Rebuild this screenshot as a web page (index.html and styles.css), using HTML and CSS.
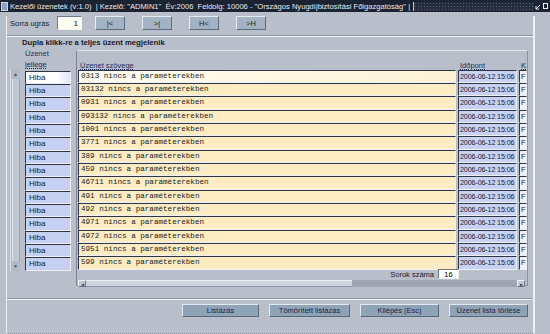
FILE: index.html
```html
<!DOCTYPE html>
<html>
<head>
    <meta charset="utf-8">
    <link rel="stylesheet" href="styles.css">
</head>
<body>
    <div class="titlebar">
        <span class="title-icon"></span>
        <span class="title-text">Kezelői üzenetek (v:1.0) &nbsp;| Kezelő: "ADMIN1" &nbsp;Év:2006 &nbsp;Feldolg: 10006 - "Országos Nyugdíjbiztosítási Főigazgatóság" |</span>
        <span class="title-fill"></span>
        <span class="title-btns">
            <svg width="14" height="8" viewBox="0 0 14 8">
                <path d="M1 7 L5 3 M1 7 H4 M1 7 V4" stroke="#e8ecf4" stroke-width="1" fill="none"/>
                <rect x="8.5" y="1.5" width="4" height="5" stroke="#e8ecf4" fill="none"/>
            </svg>
        </span>
    </div>

    <div class="window">
        <div class="toolbar">
            <label class="jump-label">Sorra ugrás</label>
            <input class="jump-input" type="text" value="1">
            <button class="nav-btn first">|&lt;</button>
            <button class="nav-btn">&gt;|</button>
            <button class="nav-btn">H&lt;</button>
            <button class="nav-btn">&gt;H</button>
        </div>

        <div class="frame">
            <div class="caption">Dupla klikk-re a teljes üzent megjelenik</div>
            <div class="panel">
                <div class="vscroll">
                    <span class="arrow up">&#9650;</span>
                    <span class="track"></span>
                    <span class="arrow down">&#9660;</span>
                </div>

                <div class="kind-col">
                    <div class="kind-head">Üzenet<br><u>jellege</u></div>
                    <div class="kind current">Hiba</div>
                    <div class="kind">Hiba</div>
                    <div class="kind">Hiba</div>
                    <div class="kind">Hiba</div>
                    <div class="kind">Hiba</div>
                    <div class="kind">Hiba</div>
                    <div class="kind">Hiba</div>
                    <div class="kind">Hiba</div>
                    <div class="kind">Hiba</div>
                    <div class="kind">Hiba</div>
                    <div class="kind">Hiba</div>
                    <div class="kind">Hiba</div>
                    <div class="kind">Hiba</div>
                    <div class="kind">Hiba</div>
                    <div class="kind">Hiba</div>
                </div>

                <div class="grid">
                    <div class="grid-head">
                        <span class="col-msg">Üzenet szövege</span>
                        <span class="col-time">Időpont</span>
                        <span class="col-k">K</span>
                    </div>
                    <div class="row current"><span class="msg">0313 nincs a paraméterekben</span><span class="time">2006-06-12 15:06</span><span class="k">F</span></div>
                    <div class="row"><span class="msg">03132 nincs a paraméterekben</span><span class="time">2006-06-12 15:06</span><span class="k">F</span></div>
                    <div class="row"><span class="msg">0931 nincs a paraméterekben</span><span class="time">2006-06-12 15:06</span><span class="k">F</span></div>
                    <div class="row"><span class="msg">093132 nincs a paraméterekben</span><span class="time">2006-06-12 15:06</span><span class="k">F</span></div>
                    <div class="row"><span class="msg">1001 nincs a paraméterekben</span><span class="time">2006-06-12 15:06</span><span class="k">F</span></div>
                    <div class="row"><span class="msg">3771 nincs a paraméterekben</span><span class="time">2006-06-12 15:06</span><span class="k">F</span></div>
                    <div class="row"><span class="msg">389 nincs a paraméterekben</span><span class="time">2006-06-12 15:06</span><span class="k">F</span></div>
                    <div class="row"><span class="msg">459 nincs a paraméterekben</span><span class="time">2006-06-12 15:06</span><span class="k">F</span></div>
                    <div class="row"><span class="msg">46711 nincs a paraméterekben</span><span class="time">2006-06-12 15:06</span><span class="k">F</span></div>
                    <div class="row"><span class="msg">491 nincs a paraméterekben</span><span class="time">2006-06-12 15:06</span><span class="k">F</span></div>
                    <div class="row"><span class="msg">492 nincs a paraméterekben</span><span class="time">2006-06-12 15:06</span><span class="k">F</span></div>
                    <div class="row"><span class="msg">4971 nincs a paraméterekben</span><span class="time">2006-06-12 15:06</span><span class="k">F</span></div>
                    <div class="row"><span class="msg">4972 nincs a paraméterekben</span><span class="time">2006-06-12 15:06</span><span class="k">F</span></div>
                    <div class="row"><span class="msg">5951 nincs a paraméterekben</span><span class="time">2006-06-12 15:06</span><span class="k">F</span></div>
                    <div class="row"><span class="msg">599 nincs a paraméterekben</span><span class="time">2006-06-12 15:06</span><span class="k">F</span></div>
                    <div class="count">
                        <span>Sorok száma</span>
                        <input class="count-input" type="text" value="16">
                    </div>
                    <div class="hscroll">
                        <span class="h-arrow">&#9664;</span>
                        <span class="h-thumb"></span>
                        <span class="h-rest"></span>
                        <span class="h-arrow right">&#9654;</span>
                    </div>
                </div>
            </div>
        </div>

        <div class="actions">
            <button class="act-btn w77">Listázás</button>
            <button class="act-btn w81">Tömörített listázás</button>
            <button class="act-btn w79">Kilépés (Esc)</button>
            <button class="act-btn w79">Üzenet lista törlése</button>
        </div>
    </div>
</body>
</html>
```

FILE: styles.css
```css
body {
    margin: 0;
    width: 550px;
    height: 334px;
    overflow: hidden;
    background: #b9bfca;
    font-family: "Liberation Sans", Arial, sans-serif;
    font-size: 7.5px;
    color: #141c30;
    white-space: nowrap;
}
.titlebar {
    height: 12px;
    display: flex;
    align-items: center;
    background: #1b2232;
    color: #e8ecf4;
    font-size: 7.6px;
}
.title-icon {
    width: 5px;
    height: 7px;
    margin: 0 2px 0 1px;
    background: #8fa0c0;
    border: 1px solid #d0d8e8;
}
.title-text {
    padding-right: 3px;
}
.title-fill {
    flex: 1;
    height: 9px;
    background-color: #232b3c;
    background-image: radial-gradient(#56607a 0.6px, transparent 0.8px);
    background-size: 3px 3px;
    border-left: 1px solid #c8ccd6;
}
.title-btns {
    width: 16px;
    display: flex;
    justify-content: center;
}
.window {
    width: 526px;
    height: 317px;
    margin-left: 6px;
    border-left: 1px solid #eef0f4;
    border-right: 2px solid #eef0f4;
    border-bottom: 1px dotted #8a92a0;
}
.toolbar {
    display: flex;
    align-items: center;
    height: 14px;
    margin-top: 4px;
    padding-left: 3px;
}
.jump-label {
    width: 47px;
}
.jump-input {
    width: 25px;
    height: 14px;
    box-sizing: border-box;
    padding: 0 3px;
    border: 1px solid;
    border-color: #707888 #f4f4f4 #f4f4f4 #707888;
    background: #fffef2;
    font: 7.5px "Liberation Sans", Arial, sans-serif;
    text-align: right;
}
.nav-btn {
    width: 30px;
    height: 14px;
    margin-left: 17px;
    padding: 0;
    background: #a3b3c3;
    border: 1px solid;
    border-color: #e6ecf2 #5d6c7c #5d6c7c #e6ecf2;
    font: 7.5px "Liberation Sans", Arial, sans-serif;
    color: #141c30;
}
.nav-btn.first {
    margin-left: 13px;
}
.frame {
    height: 262px;
    margin-top: 6px;
    border-top: 1px solid #f0f2f6;
    border-bottom: 1px solid #f0f2f6;
    box-shadow: 0 -1px 0 #8c94a2, 0 -1px 0 #8c94a2 inset;
}
.caption {
    height: 11px;
    line-height: 11px;
    padding-left: 15px;
    font-size: 7.7px;
    font-weight: bold;
}
.panel {
    display: flex;
    align-items: flex-start;
    padding-left: 3px;
}
.vscroll {
    width: 10px;
    height: 202px;
    margin-top: 21px;
    display: flex;
    flex-direction: column;
    align-items: center;
    background: #b3bac5;
    border-left: 1px solid #d8dce4;
    box-sizing: border-box;
}
.vscroll .arrow {
    font-size: 5px;
    line-height: 10px;
    color: #4a5262;
}
.vscroll .track {
    flex: 1;
    width: 6px;
    background: #c1c7d1;
    border-left: 1px solid #dde1e8;
    border-right: 1px solid #9aa2ae;
}
.kind-col {
    width: 46px;
    margin-left: 5px;
}
.kind-head {
    height: 22.7px;
    line-height: 11px;
    color: #1e2a60;
}
.kind-head u {
    text-decoration-style: dotted;
}
.kind {
    height: 13.33px;
    box-sizing: border-box;
    padding-left: 3px;
    line-height: 11px;
    background: #c6d0f0;
    border: 1px solid;
    border-color: #2e3646 #eef0f6 #eef0f6 #2e3646;
    font-size: 8px;
}
.kind.current {
    background: linear-gradient(to right, #ffffff 70%, #dfe5f8);
}
.grid {
    width: 452px;
    height: 236px;
    margin-left: 5px;
    margin-top: 2px;
    box-sizing: border-box;
    padding-left: 1px;
    border: 1px solid;
    border-color: #dfe3ea #8b93a2 #8b93a2 #7d8595;
}
.grid-head {
    height: 18.7px;
    display: flex;
    align-items: flex-end;
    line-height: 9px;
    color: #1e2a60;
}
.grid-head span {
    text-decoration: underline dotted;
}
.col-msg {
    width: 378px;
    padding-left: 2px;
}
.col-time {
    width: 61px;
    padding-left: 2px;
}
.row {
    height: 13.33px;
    display: flex;
    gap: 2px;
}
.row span {
    box-sizing: border-box;
    line-height: 11px;
    overflow: hidden;
    border: 1px solid;
    border-color: #2e3646 #eef0f6 #eef0f6 #2e3646;
}
.msg {
    width: 378px;
    padding-left: 2px;
    background: #fcecc4;
    font: 7.6px "Liberation Mono", "Courier New", monospace;
    color: #1a1a1a;
}
.row.current .msg {
    background: linear-gradient(to right, #fffdf2, #fdf3d6);
}
.time {
    width: 59px;
    padding-left: 1px;
    background: #c7d2f3;
    font-size: 7.2px;
    letter-spacing: -0.15px;
}
.k {
    width: 8px;
    padding-left: 1px;
    background: #eef0f6;
}
.count {
    height: 9px;
    display: flex;
    justify-content: flex-end;
    align-items: center;
    padding-right: 68px;
    gap: 4px;
}
.count-input {
    width: 21px;
    height: 10px;
    box-sizing: border-box;
    padding: 0 3px;
    border: 1px solid;
    border-color: #707888 #f4f4f4 #f4f4f4 #707888;
    background: #ffffff;
    font: 7.5px "Liberation Sans", Arial, sans-serif;
    text-align: center;
}
.hscroll {
    height: 7px;
    display: flex;
    margin-top: 1px;
    margin-right: 2px;
}
.h-arrow {
    width: 8px;
    font-size: 4px;
    line-height: 7px;
    text-align: center;
    color: #3c4454;
    background: #c3c9d3;
    border: 1px solid;
    border-color: #eef0f4 #707888 #707888 #eef0f4;
    box-sizing: border-box;
}
.h-thumb {
    width: 266px;
    background: #d0d5dd;
    border-top: 1px solid #eef0f4;
    border-bottom: 1px solid #8c94a2;
    box-sizing: border-box;
}
.h-rest {
    flex: 1;
    background: #9ea6b2;
}
.actions {
    display: flex;
    justify-content: flex-end;
    gap: 10px;
    margin-top: 4px;
    padding-right: 5px;
}
.act-btn {
    height: 13px;
    padding: 0;
    background: #8fa3b6;
    border: 1px solid;
    border-color: #e2e9f0 #56687a #56687a #e2e9f0;
    font: 7.5px "Liberation Sans", Arial, sans-serif;
    color: #18244a;
}
.w77 { width: 77px; }
.w79 { width: 79px; }
.w81 { width: 81px; }
```
